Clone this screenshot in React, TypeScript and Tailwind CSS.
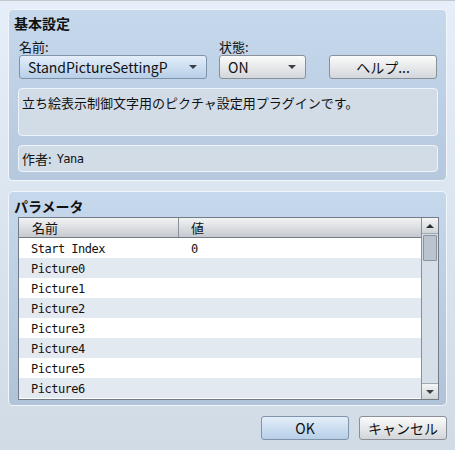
const ui = { fontFamily: '"Noto Sans CJK JP", "Noto Sans", sans-serif' };
const mono = { fontFamily: '"DejaVu Sans Mono", "Noto Sans CJK JP", monospace' };

const rows = [
  { name: 'Start Index', value: '0' },
  { name: 'Picture0', value: '' },
  { name: 'Picture1', value: '' },
  { name: 'Picture2', value: '' },
  { name: 'Picture3', value: '' },
  { name: 'Picture4', value: '' },
  { name: 'Picture5', value: '' },
  { name: 'Picture6', value: '' },
];

function Caret() {
  return (
    <svg width="8" height="4" viewBox="0 0 8 4" className="shrink-0">
      <path d="M0 0h8L4 4z" fill="#3a3f45" />
    </svg>
  );
}

function Select({ label, blue, width }: { label: string; blue?: boolean; width: string }) {
  return (
    <div
      className={`${width} shrink-0 h-[24px] flex items-center justify-between pl-[8px] pr-[9px] rounded-[3px] border text-[14px] text-[#111] ${
        blue
          ? 'border-[#7f93ab] bg-gradient-to-b from-[#e4eef9] to-[#b7cfe8]'
          : 'border-[#8a9098] bg-gradient-to-b from-[#fbfbfb] to-[#d3d6da]'
      }`}
    >
      <span className="leading-none">{label}</span>
      <Caret />
    </div>
  );
}

function Button({ label, blue, width }: { label: string; blue?: boolean; width: string }) {
  return (
    <div
      className={`${width} shrink-0 h-[24px] flex items-center justify-center rounded-[3px] border text-[14px] text-[#111] ${
        blue
          ? 'border-[#7f93ab] bg-gradient-to-b from-[#e4eef9] to-[#b7cfe8]'
          : 'border-[#8a9098] bg-gradient-to-b from-[#fbfbfb] to-[#d3d6da]'
      }`}
    >
      {label}
    </div>
  );
}

export default function App() {
  return (
    <div
      className="w-[455px] h-[450px] border-t border-[#c4c8cc] bg-gradient-to-b from-[#e5eef9] to-[#d0dbe6] px-[8px] pt-[8px] overflow-hidden"
      style={ui}
    >
      {/* 基本設定 */}
      <div className="h-[172px] rounded-[5px] border border-[#f2f6fb] bg-gradient-to-b from-[#c6d8ec] to-[#b5c8dd] pl-[5px] pr-[8px]">
        <div className="h-[24px] pt-[3px] text-[14px] font-bold text-[#111] leading-[20px]">基本設定</div>
        <div className="flex pl-[5px] h-[21px] text-[13px] text-[#111] leading-[18px] pt-[4px]">
          <span className="w-[200px]">名前:</span>
          <span>状態:</span>
        </div>
        <div className="flex pl-[5px]">
          <Select label="StandPictureSettingP" blue width="w-[188px]" />
          <div className="ml-[12px]">
            <Select label="ON" width="w-[87px]" />
          </div>
          <div className="ml-[23px]">
            <Button label="ヘルプ..." width="w-[108px]" />
          </div>
        </div>
        <div className="ml-[4px] mt-[9px] h-[48px] rounded-[4px] border border-[#eef3f9] bg-[#d2dce7] px-[3px] pt-[5px] text-[13px] text-[#111] leading-[18px]">
          立ち絵表示制御文字用のピクチャ設定用プラグインです。
        </div>
        <div className="ml-[4px] mt-[9px] h-[27px] rounded-[4px] border border-[#eef3f9] bg-[#d2dce7] px-[3px] flex items-center text-[13px] text-[#111]">
          <span>作者:</span>
          <span className="ml-[5px] text-[12px] tracking-[-0.5px]" style={mono}>Yana</span>
        </div>
      </div>

      {/* パラメータ */}
      <div className="mt-[10px] h-[215px] rounded-[5px] border border-[#f2f6fb] bg-gradient-to-b from-[#c6d8ec] to-[#b0c3d8] pl-[5px] pr-[7px]">
        <div className="h-[25px] pt-[4px] text-[14px] font-bold text-[#111] leading-[20px]">パラメータ</div>
        <div className="ml-[4px] h-[183px] border border-[#737c86] flex bg-white">
          <div className="flex-1 flex flex-col">
            <div className="h-[20px] flex border-b border-[#737c86] bg-gradient-to-b from-[#f2f3f4] to-[#c6cacf] text-[13px] text-[#111]">
              <div className="w-[160px] border-r border-[#8a9098] pl-[13px] leading-[19px]">名前</div>
              <div className="flex-1 pl-[12px] leading-[19px]">値</div>
            </div>
            {rows.map((r, i) => (
              <div
                key={r.name}
                className={`h-[20px] flex items-center pt-[1px] text-[12px] tracking-[-0.5px] text-[#111] ${i % 2 === 0 ? 'bg-white' : 'bg-[#e3e9f0]'}`}
                style={mono}
              >
                <div className="w-[160px] pl-[12px]">{r.name}</div>
                <div className="flex-1 pl-[12px]">{r.value}</div>
              </div>
            ))}
          </div>
          <div className="w-[17px] border-l border-[#8a9098] bg-[#d6dfe8] flex flex-col">
            <div className="h-[16px] flex items-center justify-center bg-gradient-to-b from-[#f4f5f6] to-[#d0d4d8] border-b border-[#a0a8b0]">
              <svg width="8" height="4" viewBox="0 0 8 4"><path d="M4 0l4 4H0z" fill="#2c3036" /></svg>
            </div>
            <div className="mx-[1px] mt-[1px] h-[26px] rounded-[1px] border border-[#8a949e] bg-[#b9c4cf]" />
            <div className="flex-1" />
            <div className="h-[16px] flex items-center justify-center bg-gradient-to-b from-[#f4f5f6] to-[#d0d4d8] border-t border-[#a0a8b0]">
              <Caret />
            </div>
          </div>
        </div>
      </div>

      <div className="mt-[10px] flex justify-end gap-[10px]">
        <Button label="OK" blue width="w-[88px]" />
        <Button label="キャンセル" width="w-[88px]" />
      </div>
    </div>
  );
}
